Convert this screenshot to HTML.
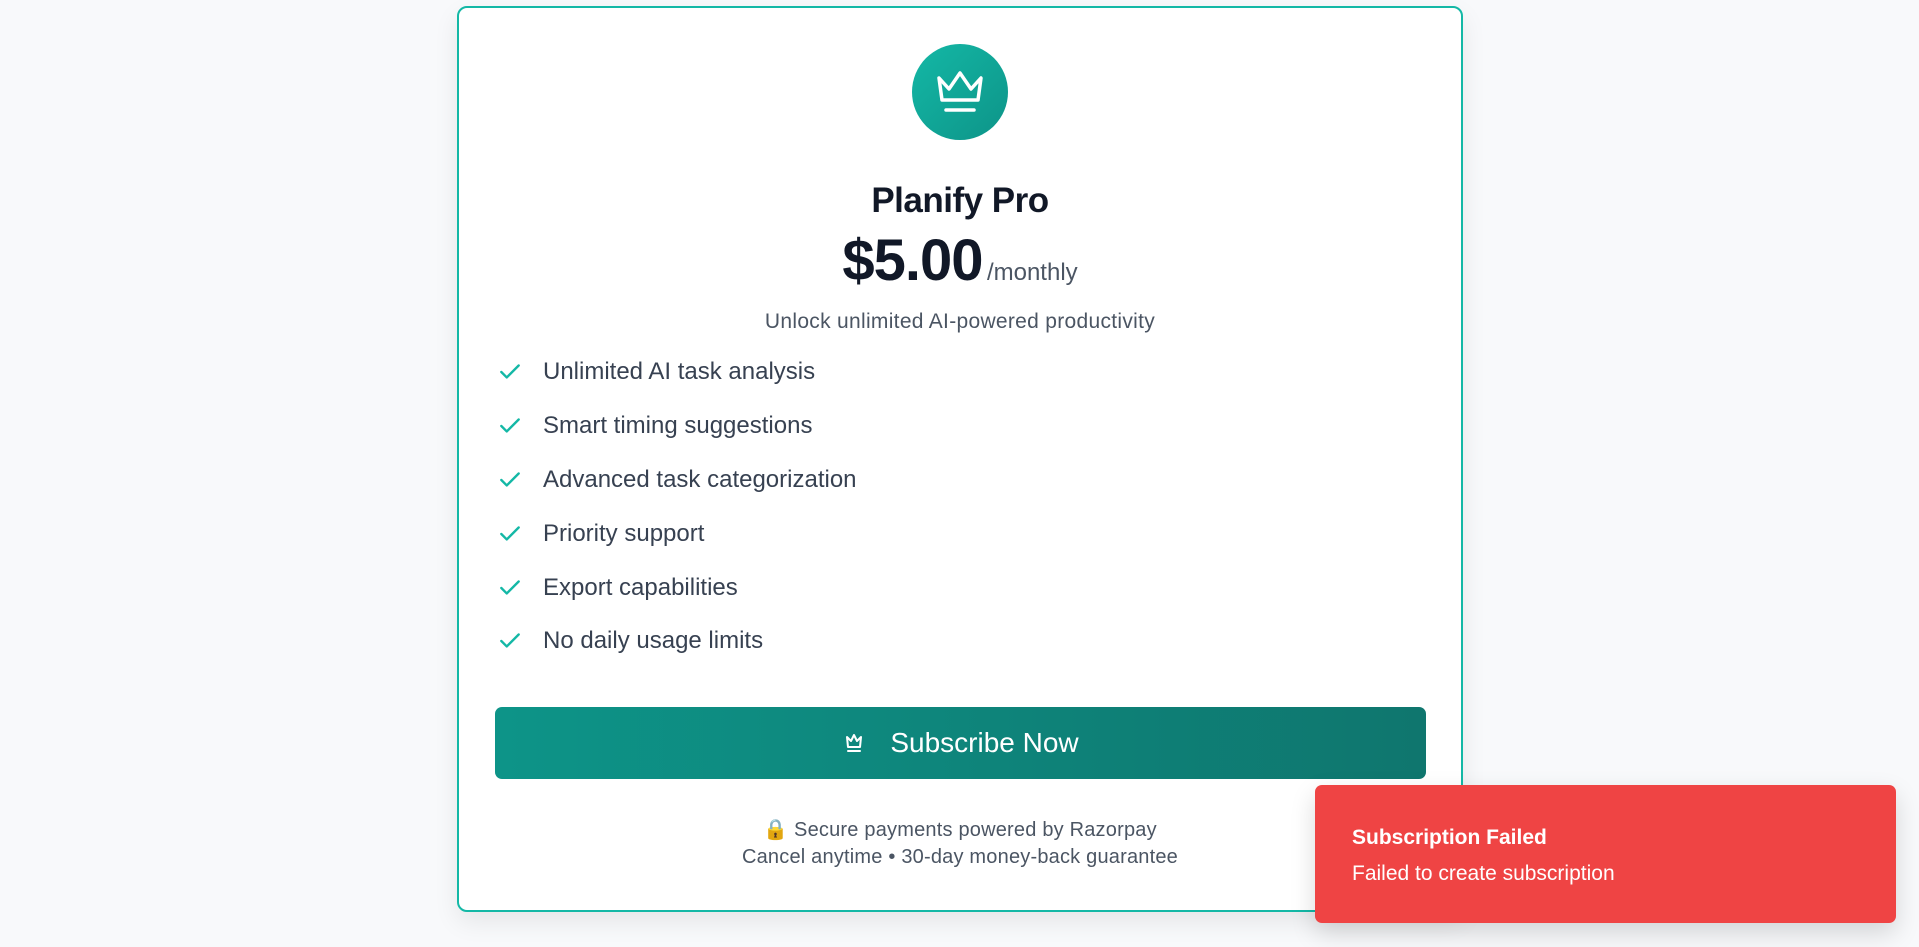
<!DOCTYPE html>
<html><head><meta charset="utf-8"><style>
*{box-sizing:border-box;margin:0;padding:0}
body{width:1919px;height:947px;background:#f8f9fb;font-family:"Liberation Sans",sans-serif;position:relative;overflow:hidden}
.card{position:absolute;left:457px;top:6px;width:1006px;height:906px;background:#fff;border:2px solid #14b8a6;border-radius:10px;box-shadow:0 10px 25px rgba(0,0,0,.08)}
.icon{position:absolute;left:453px;top:36px;width:96px;height:96px;border-radius:50%;background:linear-gradient(135deg,#14b8a6,#0d9488)}
.title{position:absolute;top:173px;width:100%;text-align:center;font-size:35px;font-weight:bold;color:#111827;letter-spacing:-0.5px}
.price{position:absolute;top:219px;width:100%;text-align:center;color:#111827}
.price b{font-size:58px;letter-spacing:-1px}
.price span{font-size:24px;color:#4b5563}
.sub{position:absolute;top:302px;width:100%;text-align:center;font-size:21px;letter-spacing:0.3px;color:#4b5563}
.feat{position:absolute;left:38px;font-size:24px;color:#374151;display:flex;align-items:center}
.feat svg{margin-right:20px}
.btn{position:absolute;left:36px;top:699px;width:931px;height:72px;border-radius:7px;background:linear-gradient(90deg,#0d9488,#0f766e);color:#fff;font-size:28px;display:flex;align-items:center;justify-content:center}
.foot{position:absolute;width:100%;text-align:center;font-size:20px;letter-spacing:0.2px;color:#4b5563}
.toast{position:absolute;left:1315px;top:785px;width:581px;height:138px;background:#ef4444;border-radius:7px;color:#fff;padding:41px 37px;box-shadow:0 10px 25px rgba(0,0,0,.15)}
</style></head><body>
<div class="card">
<div class="icon"><svg width="96" height="96" viewBox="0 0 96 96" fill="none" stroke="#fff" stroke-width="3.5" stroke-linejoin="round" stroke-linecap="round"><path d="M27 34 L37 45 L48 29 L59 45 L69 34 L66 56 L30 56 Z"/><path d="M34 66 H62"/></svg></div>
<div class="title">Planify Pro</div>
<div class="price"><b>$5.00</b> <span>/monthly</span></div>
<div class="sub">Unlock unlimited AI-powered productivity</div>
<div class="feat" style="top:350px"><svg width="26" height="26" viewBox="0 0 24 24" fill="none" stroke="#14b8a6" stroke-width="2.2" stroke-linecap="round" stroke-linejoin="round"><path d="M4 12l5 5L20 6"/></svg>Unlimited AI task analysis</div>
<div class="feat" style="top:404px"><svg width="26" height="26" viewBox="0 0 24 24" fill="none" stroke="#14b8a6" stroke-width="2.2" stroke-linecap="round" stroke-linejoin="round"><path d="M4 12l5 5L20 6"/></svg>Smart timing suggestions</div>
<div class="feat" style="top:458px"><svg width="26" height="26" viewBox="0 0 24 24" fill="none" stroke="#14b8a6" stroke-width="2.2" stroke-linecap="round" stroke-linejoin="round"><path d="M4 12l5 5L20 6"/></svg>Advanced task categorization</div>
<div class="feat" style="top:512px"><svg width="26" height="26" viewBox="0 0 24 24" fill="none" stroke="#14b8a6" stroke-width="2.2" stroke-linecap="round" stroke-linejoin="round"><path d="M4 12l5 5L20 6"/></svg>Priority support</div>
<div class="feat" style="top:566px"><svg width="26" height="26" viewBox="0 0 24 24" fill="none" stroke="#14b8a6" stroke-width="2.2" stroke-linecap="round" stroke-linejoin="round"><path d="M4 12l5 5L20 6"/></svg>Export capabilities</div>
<div class="feat" style="top:619px"><svg width="26" height="26" viewBox="0 0 24 24" fill="none" stroke="#14b8a6" stroke-width="2.2" stroke-linecap="round" stroke-linejoin="round"><path d="M4 12l5 5L20 6"/></svg>No daily usage limits</div>
<div class="btn"><svg width="24" height="24" viewBox="0 0 24 24" fill="none" stroke="#fff" stroke-width="2" stroke-linejoin="round" stroke-linecap="round" style="margin-right:24px"><path d="M5 6 L9 10 L12 4 L15 10 L19 6 L18 16 L6 16 Z"/><path d="M6 20 H18"/></svg>Subscribe Now</div>
<div class="foot" style="top:809px">🔒 Secure payments powered by Razorpay</div>
<div class="foot" style="top:838px">Cancel anytime • 30-day money-back guarantee</div>
</div>
<div class="toast"><div style="font-size:21px;font-weight:bold">Subscription Failed</div><div style="font-size:21px;margin-top:12px">Failed to create subscription</div></div>
</body></html>
